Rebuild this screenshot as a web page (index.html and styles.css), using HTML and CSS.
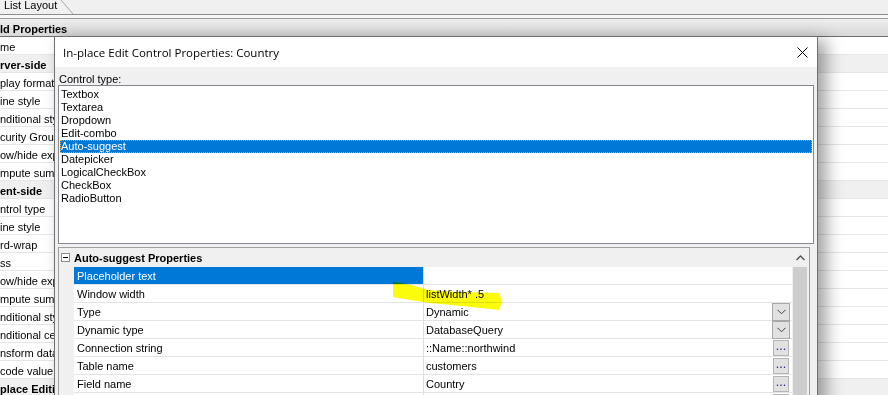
FILE: index.html
```html
<!DOCTYPE html>
<html lang="en">

<head>
    <meta charset="UTF-8">
    <meta name="viewport" content="width=device-width, initial-scale=1.0">
    <title>In-place Edit Control Properties: Country</title>
    <link rel="stylesheet" href="styles.css">
</head>

<body>
    <!-- Background: the list layout property grid -->
    <div class="tabstrip">
        <div class="tab">List Layout</div>
        <svg class="tab-edge" width="80" height="14" viewBox="0 0 80 14">
            <line x1="61" y1="0" x2="73" y2="14" stroke="#a8a8a8" stroke-width="1"/>
        </svg>
    </div>
    <div class="tabline"></div>

    <div class="bg-grid">
        <div class="bg-row head">ld Properties</div>
        <div class="bg-row">me</div>
        <div class="bg-row cat">rver-side</div>
        <div class="bg-row">play format</div>
        <div class="bg-row">ine style</div>
        <div class="bg-row">nditional sty</div>
        <div class="bg-row">curity Group</div>
        <div class="bg-row">ow/hide exp</div>
        <div class="bg-row">mpute summ</div>
        <div class="bg-row cat">ent-side</div>
        <div class="bg-row">ntrol type</div>
        <div class="bg-row">ine style</div>
        <div class="bg-row">rd-wrap</div>
        <div class="bg-row">ss</div>
        <div class="bg-row">ow/hide exp</div>
        <div class="bg-row">mpute summ</div>
        <div class="bg-row">nditional sty</div>
        <div class="bg-row">nditional cell</div>
        <div class="bg-row">nsform data</div>
        <div class="bg-row">code value</div>
        <div class="bg-row cat">place Editi</div>
    </div>

    <!-- Dialog -->
    <div class="dialog">
        <div class="dialog-title">
            <span>In-place Edit Control Properties: Country</span>
            <svg class="dialog-close" width="11" height="11" viewBox="0 0 11 11">
                <path d="M0.5 0.5 L10.5 10.5 M10.5 0.5 L0.5 10.5" stroke="#000" stroke-width="1"/>
            </svg>
        </div>

        <div class="dialog-body">
            <div class="field-label">Control type:</div>
            <div class="listbox">
                <div class="list-item">Textbox</div>
                <div class="list-item">Textarea</div>
                <div class="list-item">Dropdown</div>
                <div class="list-item">Edit-combo</div>
                <div class="list-item selected">Auto-suggest</div>
                <div class="list-item">Datepicker</div>
                <div class="list-item">LogicalCheckBox</div>
                <div class="list-item">CheckBox</div>
                <div class="list-item">RadioButton</div>
            </div>

            <div class="propgrid">
                <div class="pg-main">
                    <div class="pg-cat">
                        <span class="pg-toggle"></span>
                        Auto-suggest Properties
                    </div>
                    <div class="pg-row selected">
                        <div class="pg-name">Placeholder text</div>
                        <div class="pg-value"></div>
                    </div>
                    <div class="pg-row">
                        <div class="pg-name">Window width</div>
                        <div class="pg-value">listWidth* .5</div>
                    </div>
                    <div class="pg-row">
                        <div class="pg-name">Type</div>
                        <div class="pg-value">Dynamic
                            <span class="pg-drop">
                                <svg width="9" height="6" viewBox="0 0 9 6"><polyline points="0.5,0.8 4.5,4.8 8.5,0.8" fill="none" stroke="#404040" stroke-width="1"/></svg>
                            </span>
                        </div>
                    </div>
                    <div class="pg-row">
                        <div class="pg-name">Dynamic type</div>
                        <div class="pg-value">DatabaseQuery
                            <span class="pg-drop">
                                <svg width="9" height="6" viewBox="0 0 9 6"><polyline points="0.5,0.8 4.5,4.8 8.5,0.8" fill="none" stroke="#404040" stroke-width="1"/></svg>
                            </span>
                        </div>
                    </div>
                    <div class="pg-row">
                        <div class="pg-name">Connection string</div>
                        <div class="pg-value">::Name::northwind <span class="pg-more">...</span></div>
                    </div>
                    <div class="pg-row">
                        <div class="pg-name">Table name</div>
                        <div class="pg-value">customers <span class="pg-more">...</span></div>
                    </div>
                    <div class="pg-row">
                        <div class="pg-name">Field name</div>
                        <div class="pg-value">Country <span class="pg-more">...</span></div>
                    </div>
                    <div class="pg-row">
                        <div class="pg-name"></div>
                        <div class="pg-value"><span></span><span class="pg-more"></span></div>
                    </div>
                </div>
                <div class="scrollbar">
                    <div class="sb-up">
                        <svg width="9" height="6" viewBox="0 0 9 6"><polyline points="0.5,5 4.5,1 8.5,5" fill="none" stroke="#505050" stroke-width="1.3"/></svg>
                    </div>
                    <div class="sb-thumb"></div>
                </div>
            </div>
        </div>
    </div>

    <!-- Highlighter stroke drawn over the screenshot -->
    <svg class="marker" width="888" height="395" viewBox="0 0 888 395">
        <polygon points="393,282 412,285 428,290 460,292 499,293 502,301 499,310 462,306 430,303 404,299 393,297" fill="#fbfb0c"/>
    </svg>
</body>

</html>
```

FILE: styles.css
```css
body {
    margin: 0;
    width: 888px;
    height: 395px;
    overflow: hidden;
    position: relative;
    background-color: #fff;
    font-family: "Liberation Sans", Arial, sans-serif;
    font-size: 11px;
    color: #000;
}

/* Background window */
.tabstrip {
    position: relative;
    height: 14px;
    background-color: #f0f0f0;
    overflow: hidden;
}

.tab {
    padding-left: 4px;
    line-height: 10px;
}

.tab-edge {
    position: absolute;
    left: 0;
    top: 0;
}

.tabline {
    height: 3px;
    background-color: #f7f7f7;
    border-top: 1px solid #8c8c8c;
    border-bottom: 1px solid #9a9a9a;
}

.bg-row {
    height: 17px;
    line-height: 20px;
    border-bottom: 1px solid #e6e6e6;
    white-space: nowrap;
    overflow: hidden;
}

.bg-row.head {
    background: linear-gradient(#eeeeee, #d8d8d8);
    border-bottom-color: #6e6e6e;
    font-weight: bold;
}

.bg-row.cat {
    background-color: #f0f0f0;
    font-weight: bold;
}

/* Dialog */
.dialog {
    position: absolute;
    left: 54px;
    top: 36px;
    width: 762px;
    height: 400px;
    border: 1px solid #707070;
    background-color: #f0f0f0;
    box-shadow: 8px 4px 16px rgba(0, 0, 0, 0.38);
}

.dialog-title {
    display: flex;
    align-items: center;
    justify-content: space-between;
    height: 30px;
    padding: 0 9px 0 8px;
    background-color: #fff;
    font-family: "Open Sans", sans-serif;
    font-size: 11.5px;
}

.field-label {
    padding: 5px 0 0 4px;
    line-height: 14px;
}

.listbox {
    box-sizing: border-box;
    height: 159px;
    margin: -1px 3px 0;
    padding: 2px 1px 0 1px;
    border: 1px solid #828790;
    background-color: #fff;
}

.list-item {
    height: 13px;
    line-height: 13px;
    padding-left: 1px;
}

.list-item.selected {
    background-color: #0078d7;
    color: #fff;
    outline: 1px dotted #e8a040;
    outline-offset: -1px;
}

/* Property grid */
.propgrid {
    display: flex;
    height: 160px;
    margin: 3px 7px 0 3px;
    border: 1px solid #a0a0a0;
    background-color: #f0f0f0;
}

.pg-main {
    flex: 1;
}

.pg-cat {
    display: flex;
    align-items: center;
    height: 19px;
    padding-left: 2px;
    font-weight: bold;
}

.pg-toggle {
    position: relative;
    box-sizing: border-box;
    width: 9px;
    height: 9px;
    margin-right: 4px;
    border: 1px solid #8f8f8f;
    background-color: #fff;
}

.pg-toggle::after {
    content: "";
    position: absolute;
    left: 1px;
    top: 3px;
    width: 5px;
    height: 1px;
    background-color: #000;
}

.pg-row {
    display: grid;
    grid-template-columns: 350px 1fr;
    margin-left: 15px;
    height: 18px;
}

.pg-name,
.pg-value {
    height: 17px;
    line-height: 18px;
    border-bottom: 1px solid #e4e4e4;
    background-color: #fff;
    white-space: nowrap;
}

.pg-name {
    padding-left: 3px;
    border-right: 1px solid #dedede;
}

.pg-value {
    display: flex;
    align-items: center;
    justify-content: space-between;
    padding: 0 2px;
}

.pg-row.selected .pg-name {
    background-color: #0078d7;
    color: #fff;
}

.pg-drop {
    display: flex;
    align-items: center;
    justify-content: center;
    box-sizing: border-box;
    width: 18px;
    height: 18px;
    margin-bottom: -1px;
    border: 1px solid #a8a8a8;
    background-color: #e1e1e1;
}

.pg-more {
    box-sizing: border-box;
    width: 16px;
    height: 16px;
    margin-right: 1px;
    border: 1px solid #b4b4b4;
    background-color: #e1e1e1;
    color: #402090;
    font-size: 9px;
    font-weight: bold;
    line-height: 13px;
    text-align: center;
    letter-spacing: 1px;
    text-indent: 1px;
}

.scrollbar {
    width: 17px;
    background-color: #f0f0f0;
}

.sb-up {
    display: flex;
    align-items: center;
    justify-content: center;
    height: 19px;
}

.sb-thumb {
    width: 14px;
    height: 140px;
    margin-left: 1px;
    background-color: #cdcdcd;
}

.marker {
    position: absolute;
    left: 0;
    top: 0;
    pointer-events: none;
    mix-blend-mode: multiply;
}
```
